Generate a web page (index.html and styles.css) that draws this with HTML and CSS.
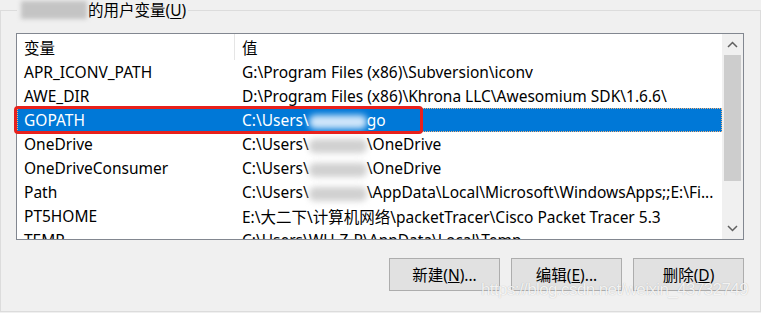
FILE: index.html
```html
<!DOCTYPE html>
<html lang="zh-CN">
<head>
    <meta charset="UTF-8">
    <title>环境变量</title>
    <link rel="stylesheet" href="styles.css">
</head>
<body>
    <fieldset class="group">
        <legend class="group-title"><span class="blur blur-title"></span>的用户变量(<u>U</u>)</legend>

        <div class="list">
            <div class="list-body">
                <div class="list-head">
                    <div class="col-name">变量</div>
                    <div class="col-value">值</div>
                </div>
                <div class="row">
                    <div class="col-name">APR_ICONV_PATH</div>
                    <div class="col-value">G:\Program Files (x86)\Subversion\iconv</div>
                </div>
                <div class="row">
                    <div class="col-name">AWE_DIR</div>
                    <div class="col-value">D:\Program Files (x86)\Khrona LLC\Awesomium SDK\1.6.6\</div>
                </div>
                <div class="row selected">
                    <div class="col-name">GOPATH</div>
                    <div class="col-value">C:\Users\<span class="blur blur-sel"></span>go</div>
                </div>
                <div class="row">
                    <div class="col-name">OneDrive</div>
                    <div class="col-value">C:\Users\<span class="blur"></span>\OneDrive</div>
                </div>
                <div class="row">
                    <div class="col-name">OneDriveConsumer</div>
                    <div class="col-value">C:\Users\<span class="blur"></span>\OneDrive</div>
                </div>
                <div class="row">
                    <div class="col-name">Path</div>
                    <div class="col-value">C:\Users\<span class="blur"></span>\AppData\Local\Microsoft\WindowsApps;;E:\Fi...</div>
                </div>
                <div class="row">
                    <div class="col-name">PT5HOME</div>
                    <div class="col-value">E:\大二下\计算机网络\packetTracer\Cisco Packet Tracer 5.3</div>
                </div>
                <div class="row">
                    <div class="col-name">TEMP</div>
                    <div class="col-value">C:\Users\WU-Z-R\AppData\Local\Temp</div>
                </div>
            </div>

            <div class="scrollbar">
                <div class="arrow">
                    <svg width="11" height="7" viewBox="0 0 11 7"><path d="M1 6 L5.5 1.5 L10 6" fill="none" stroke="#606060" stroke-width="1.5"/></svg>
                </div>
                <div class="track">
                    <div class="thumb"></div>
                </div>
                <div class="arrow">
                    <svg width="11" height="7" viewBox="0 0 11 7"><path d="M1 1 L5.5 5.5 L10 1" fill="none" stroke="#606060" stroke-width="1.5"/></svg>
                </div>
            </div>

            <div class="mark"></div>
        </div>

        <div class="buttons">
            <button class="btn">新建(<u>N</u>)...</button>
            <button class="btn">编辑(<u>E</u>)...</button>
            <button class="btn">删除(<u>D</u>)</button>
        </div>

        <div class="watermark">https://blog.csdn.net/weixin_43732749</div>
    </fieldset>
</body>
</html>
```

FILE: styles.css
```css
* {
    box-sizing: border-box;
}

body {
    margin: 0;
    background: #f0f0f0;
    font-family: 'Noto Sans', 'Noto Sans CJK SC', sans-serif;
    font-size: 15.5px;
    color: #000;
    width: 761px;
    height: 313px;
    overflow: hidden;
}

.group {
    position: relative;
    margin: 0;
    width: 761px;
    height: 312px;
    border: 1px solid #dcdcdc;
    padding: 13px 16px 0 15px;
}

.group-title {
    padding: 0 2px 0 4px;
    margin-left: 1px;
    height: 20px;
    line-height: 20px;
    display: flex;
    align-items: center;
}

.group-title u {
    text-underline-offset: 2px;
}

.blur {
    display: inline-block;
    width: 58px;
    height: 14px;
    vertical-align: middle;
    background: #d0d0d0;
    filter: blur(3px);
    border-radius: 6px;
}

.blur-title {
    width: 66px;
    height: 18px;
    background: #c4c4c4;
    filter: blur(2px);
    border-radius: 0;
    margin-right: 1px;
}

.blur-sel {
    background: #cfe6fa;
}

.list {
    position: relative;
    width: 728px;
    height: 207px;
    border: 1px solid #828790;
    background: #fff;
    display: flex;
}

.list-body {
    flex: 1;
    overflow: hidden;
}

.list-head,
.row {
    display: flex;
    align-items: center;
    white-space: nowrap;
}

.list-head {
    height: 26px;
}

.list-head .col-name {
    border-right: 1px solid #e5e5e5;
    height: 100%;
    display: flex;
    align-items: center;
}

.row {
    height: 24px;
}

.col-name {
    width: 218px;
    padding-left: 7px;
}

.col-value {
    padding-left: 7px;
}

.row.selected {
    background: #0078d7;
    color: #fff;
    outline: 1px dotted #f3b27a;
    outline-offset: -1px;
}

.scrollbar {
    width: 21px;
    display: flex;
    flex-direction: column;
    background: #f0f0f0;
    padding: 0 2px 0 2px;
}

.arrow {
    height: 21px;
    display: flex;
    align-items: center;
    justify-content: center;
}

.track {
    flex: 1;
}

.thumb {
    height: 126px;
    background: #cdcdcd;
}

.mark {
    position: absolute;
    left: -3px;
    top: 72px;
    width: 409px;
    height: 28px;
    border: 3px solid #e8211c;
    border-radius: 4px;
}

.buttons {
    display: flex;
    justify-content: flex-end;
    gap: 11px;
    width: 728px;
    margin-top: 18px;
}

.btn {
    width: 111px;
    height: 33px;
    background: #e1e1e1;
    border: 1px solid #adadad;
    font-family: 'Noto Sans', 'Noto Sans CJK SC', sans-serif;
    font-size: 15.5px;
    color: #000;
    padding: 0;
}

.watermark {
    position: absolute;
    left: 480px;
    top: 260px;
    font-family: 'Liberation Sans Narrow', 'Liberation Sans', sans-serif;
    font-size: 17px;
    letter-spacing: -0.6px;
    color: rgba(255, 255, 255, 0.85);
    text-shadow: 0 0 1px rgba(0, 0, 0, 0.25);
    pointer-events: none;
}
```
